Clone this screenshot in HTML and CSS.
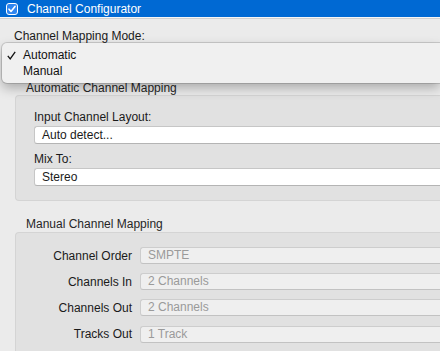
FILE: index.html
```html
<!DOCTYPE html>
<html>
<head>
<meta charset="utf-8">
<link rel="stylesheet" href="styles.css">
</head>
<body>
<div class="window">
  <div class="titlebar">
    <svg class="cb" width="12" height="12" viewBox="0 0 12 12">
      <rect x="0.5" y="0.5" width="11" height="11" rx="2.5" fill="#2f86f0" stroke="#ffffff" stroke-width="1"/>
      <path d="M3 6.2 L5 8.4 L9 3.4" fill="none" stroke="#ffffff" stroke-width="1.6" stroke-linecap="round" stroke-linejoin="round"/>
    </svg>
    <span class="title">Channel Configurator</span>
  </div>
  <div class="pane">
    <div class="mode-label">Channel Mapping Mode:</div>
    <div class="mode-popup">
      <div class="menu">
        <div class="menu-item">
          <svg class="check" width="9" height="9" viewBox="0 0 9 9">
            <path d="M0.8 4.8 L3.2 7.8 L8.2 0.8" fill="none" stroke="#111" stroke-width="1.3"/>
          </svg>
          <span>Automatic</span>
        </div>
        <div class="menu-item"><span class="nocheck"></span><span>Manual</span></div>
      </div>
    </div>

    <div class="section-title">Automatic Channel Mapping</div>
    <div class="box auto-box">
      <div class="field-label">Input Channel Layout:</div>
      <div class="field">Auto detect...</div>
      <div class="field-label second">Mix To:</div>
      <div class="field">Stereo</div>
    </div>

    <div class="section-title manual-title">Manual Channel Mapping</div>
    <div class="box manual-box">
      <div class="row-label">Channel Order</div>
      <div class="field disabled">SMPTE</div>
      <div class="row-label">Channels In</div>
      <div class="field disabled">2 Channels</div>
      <div class="row-label">Channels Out</div>
      <div class="field disabled">2 Channels</div>
      <div class="row-label">Tracks Out</div>
      <div class="field disabled last">1 Track</div>
    </div>
  </div>
</div>
</body>
</html>
```
FILE: styles.css
```css
html, body {
  margin: 0;
  padding: 0;
}
body {
  background: #ebebeb;
  font-family: "Liberation Sans", Arial, sans-serif;
  font-size: 12px;
  color: #1a1a1a;
  overflow: hidden;
  width: 440px;
  height: 351px;
}
.window {
  width: 100%;
}
.titlebar {
  height: 17px;
  background: #0069d3;
  display: flex;
  align-items: center;
  padding-left: 6px;
  border-bottom: 1px solid #f6f6f6;
}
.cb {
  display: block;
  margin-right: 9px;
}
.title {
  color: #ffffff;
  font-size: 12px;
  line-height: 14px;
}
.pane {
  border-top: 1px solid #d0d0d0;
  padding-top: 10px;
}
.mode-label {
  padding-left: 14px;
  line-height: 14px;
}
.mode-popup {
  position: relative;
  height: 38px;
}
.menu {
  position: absolute;
  top: 0;
  left: 2px;
  right: 0;
  height: 32px;
  padding: 4px 0;
  background: #f0f0f0;
  border-radius: 5px 0 0 5px;
  box-shadow: 0 0 0 1px rgba(0, 0, 0, 0.14), 0 5px 12px rgba(0, 0, 0, 0.28);
  z-index: 2;
}
.menu-item {
  height: 16px;
  display: flex;
  align-items: center;
  padding-left: 5px;
  color: #111;
}
.check, .nocheck {
  display: block;
  width: 9px;
  margin-right: 7px;
}
.section-title {
  padding-left: 26px;
  line-height: 14px;
  color: #262626;
}
.box {
  margin-left: 15px;
  background: #e1e1e1;
  border: 1px solid #d4d4d4;
  border-right: none;
  border-radius: 4px 0 0 4px;
}
.auto-box {
  padding: 14px 0 15px 18px;
  height: 75px;
}
.field-label {
  line-height: 14px;
}
.field-label.second {
  margin-top: 8px;
}
.field {
  margin-top: 2px;
  height: 16px;
  line-height: 16px;
  padding-left: 7px;
  background: #ffffff;
  border: 1px solid #c6c6c6;
  border-bottom-color: #b4b4b4;
  border-right: none;
  border-radius: 3px 0 0 3px;
  color: #1a1a1a;
}
.manual-title {
  margin-top: 16px;
  margin-bottom: 1px;
}
.manual-box {
  display: grid;
  grid-template-columns: 116px 1fr;
  column-gap: 8px;
  row-gap: 9px;
  align-items: center;
  padding-top: 14px;
  padding-bottom: 20px;
  border-bottom: none;
  border-bottom-left-radius: 0;
}
.row-label {
  text-align: right;
  line-height: 14px;
}
.field.disabled {
  margin-top: 0;
  height: 15px;
  line-height: 15px;
  background: #efefef;
  border-color: #cdcdcd;
  border-bottom-color: #c2c2c2;
  border-right: none;
  color: #9a9a9a;
}
.field.last {
  margin-top: 1px;
}
```
